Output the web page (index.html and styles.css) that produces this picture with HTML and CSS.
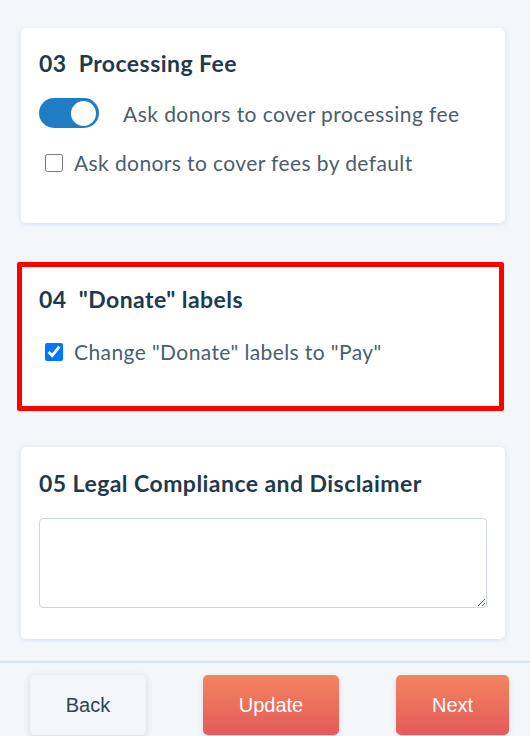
FILE: index.html
```html
<!DOCTYPE html>
<html lang="en">
<head>
<meta charset="utf-8">
<title>Settings</title>
<link rel="stylesheet" href="styles.css">
</head>
<body>
<main class="content">
  <section class="card card-fee">
    <h2 class="card-title">03&nbsp; Processing Fee</h2>
    <div class="toggle-row">
      <span class="toggle"><span class="knob"></span></span>
      <span class="toggle-label">Ask donors to cover processing fee</span>
    </div>
    <label class="check-row">
      <input type="checkbox" class="check">
      <span>Ask donors to cover fees by default</span>
    </label>
  </section>

  <section class="card card-labels">
    <h2 class="card-title">04&nbsp; "Donate" labels</h2>
    <label class="check-row">
      <input type="checkbox" class="check" checked>
      <span>Change "Donate" labels to "Pay"</span>
    </label>
  </section>

  <section class="card card-legal">
    <h2 class="card-title">05 Legal Compliance and Disclaimer</h2>
    <textarea class="legal-input"></textarea>
  </section>
</main>
<footer class="footer">
  <button class="btn btn-back">Back</button>
  <button class="btn btn-primary btn-update">Update</button>
  <button class="btn btn-primary btn-next">Next</button>
</footer>
</body>
</html>
```

FILE: styles.css
```css
* { box-sizing: border-box; }

html, body {
  margin: 0;
  padding: 0;
  background: #f3f7fa;
  width: 530px;
  height: 736px;
  overflow: hidden;
}

body {
  font-family: Lato, "Noto Sans", sans-serif;
  color: #4a5e6c;
}

.content {
  padding: 28px 25px 0 21px;
  height: 661px;
}

.card {
  background: #ffffff;
  border-radius: 5px;
  box-shadow: 0 1px 5px rgba(140, 180, 220, 0.35);
  padding: 20px 18px 0 18px;
}

.card-fee {
  height: 195px;
  margin-bottom: 39px;
}

.card-labels {
  height: 149px;
  margin: 0 1px 36px -4px;
  border: 5px solid #ff0000;
  border-radius: 2px;
  padding: 17px 18px 0 17px;
  box-shadow: none;
}

.card-legal {
  height: 192px;
  padding-top: 21px;
}

.card-title {
  margin: 0;
  font-size: 23px;
  line-height: 30px;
  font-weight: 700;
  letter-spacing: 0.45px;
  color: #1f3a4b;
}

.toggle-row {
  display: flex;
  align-items: center;
  margin-top: 20px;
  gap: 24px;
}

.toggle {
  width: 60px;
  height: 30px;
  border-radius: 15px;
  background: #1f7dc6;
  display: flex;
  align-items: center;
  justify-content: flex-end;
  padding-right: 3px;
}

.knob {
  width: 25px;
  height: 25px;
  border-radius: 50%;
  background: #ffffff;
}

.toggle-label {
  font-size: 21px;
  letter-spacing: 0.45px;
}

.check-row {
  display: flex;
  align-items: center;
  gap: 11px;
  margin-top: 22px;
  padding-left: 6px;
  font-size: 21px;
  line-height: 26px;
  letter-spacing: 0.4px;
}

.card-labels .check-row {
  margin-top: 25px;
}

.check {
  width: 18px;
  height: 18px;
  margin: 0;
}

.legal-input {
  display: block;
  width: 100%;
  height: 90px;
  margin-top: 20px;
  border: 1px solid #cdd6e0;
  border-radius: 4px;
  background: #ffffff;
}

.footer {
  border-top: 2px solid #d6e5f3;
  padding: 12px 0 0 30px;
  display: flex;
  gap: 57px;
}

.btn {
  height: 60px;
  border: none;
  border-radius: 5px;
  font-family: "Liberation Sans", Arial, sans-serif;
  font-size: 20px;
  cursor: pointer;
}

.btn-back {
  width: 116px;
  background: #f2f6fa;
  color: #2a4253;
  box-shadow: 0 2px 8px rgba(0, 0, 0, 0.12);
}

.btn-primary {
  color: #ffffff;
  background: linear-gradient(#f3845f, #e45a5a);
  box-shadow: 0 2px 6px rgba(0, 0, 0, 0.1);
}

.btn-update { width: 136px; }
.btn-next { width: 113px; }
```
